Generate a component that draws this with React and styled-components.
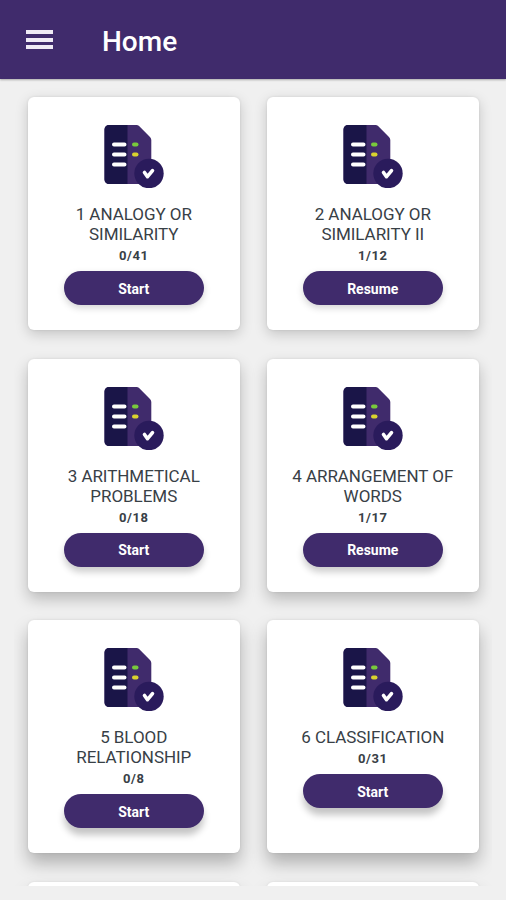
import React from 'react';
import styled, { createGlobalStyle } from 'styled-components';

const theme = {
    primary: '#402b6c',
    dark: '#1a1548',
    badge: '#2a1b5c',
    background: '#f0f0f0',
    text: '#384046'
};

const GlobalStyle = createGlobalStyle`
    body {
        margin: 0;
        background-color: ${ theme.background };
        font-family: Roboto, "Liberation Sans", sans-serif;
    }
`;

const Screen = styled.div`
    display: flex;
    flex-direction: column;
    width: 506px;
    height: 900px;
    overflow: hidden;
    background-color: ${ theme.background };
`;

const Header = styled.header`
    display: flex;
    align-items: center;
    height: 79px;
    min-height: 79px;
    box-sizing: border-box;
    padding: 4px 26px 0 26px;
    background-color: ${ theme.primary };
    box-shadow: 0 1px 2px rgba(0, 0, 0, 0.3);
    color: #fff;
`;

const MenuButton = styled.button`
    display: flex;
    flex-direction: column;
    justify-content: space-between;
    width: 27px;
    height: 19px;
    margin-bottom: 4px;
    padding: 0;
    border: none;
    background: none;
`;

const MenuLine = styled.span`
    width: 100%;
    height: 4px;
    background-color: #efeaf5;
`;

const Title = styled.h1`
    margin: 0 0 0 49px;
    font-size: 28px;
    font-weight: 500;
    line-height: 34px;
`;

const Content = styled.main`
    height: 807px;
    box-sizing: border-box;
    margin: 0 14px;
    padding: 18px 13.5px 0 14px;
    overflow: hidden;
`;

const Grid = styled.div`
    display: grid;
    grid-template-columns: 211.5px 211.5px;
    grid-auto-rows: 233px;
    gap: 28.5px 27.5px;
`;

const Card = styled.section`
    display: flex;
    flex-direction: column;
    align-items: center;
    box-sizing: border-box;
    padding-top: 27px;
    border-radius: 6px;
    background-color: #fff;
    box-shadow: 0 ${ props => 4 + props.$row * 3 }px ${ props => 13 + props.$row * 2 }px rgba(0, 0, 0, ${ props => 0.19 + props.$row * 0.04 }),
        0 0 3px rgba(0, 0, 0, 0.08);
    color: ${ theme.text };
`;

const Name = styled.h2`
    width: 180px;
    margin: 16px 0 0;
    font-size: 17px;
    font-weight: 400;
    line-height: 20px;
    letter-spacing: -0.05px;
    text-align: center;
    white-space: pre-line;
`;

const Progress = styled.span`
    margin-top: 3px;
    font-size: 13px;
    font-weight: 700;
    line-height: 18px;
    letter-spacing: 0.6px;
`;

const Action = styled.button`
    width: 140px;
    height: 34px;
    margin-top: 6px;
    padding: 1px 0 0;
    border: none;
    border-radius: 17px;
    background-color: ${ theme.primary };
    box-shadow: 0 ${ props => 3 + props.$row * 2 }px 7px rgba(0, 0, 0, ${ props => 0.17 + props.$row * 0.03 });
    color: #fff;
    font-family: inherit;
    font-size: 14px;
    font-weight: 700;
`;

const topics = [
    { name: '1 ANALOGY OR\nSIMILARITY', progress: '0/41', action: 'Start' },
    { name: '2 ANALOGY OR\nSIMILARITY II', progress: '1/12', action: 'Resume' },
    { name: '3 ARITHMETICAL\nPROBLEMS', progress: '0/18', action: 'Start' },
    { name: '4 ARRANGEMENT OF\nWORDS', progress: '1/17', action: 'Resume' },
    { name: '5 BLOOD\nRELATIONSHIP', progress: '0/8', action: 'Start' },
    { name: '6 CLASSIFICATION', progress: '0/31', action: 'Start' }
];

const QuizIcon = () => (
    <svg width="60" height="64" viewBox="0 0 60 64">
        <path d="M5 1H32.500q1.500 0 2.600 1.100L46 13q1.300 1.300 1.300 3V60H5a4.500 4.500 0 0 1-4.500-4.500V5.500A4.500 4.500 0 0 1 5 1z" fill={ theme.primary } />
        <path d="M5 1H23.500V60H5a4.500 4.500 0 0 1-4.500-4.500V5.500A4.500 4.500 0 0 1 5 1z" fill={ theme.dark } />
        <g strokeWidth="4" strokeLinecap="round">
            <path d="M10 20.500h10.500M10 30.500h10.500M10 40.500h10.500" stroke="#fff" />
            <path d="M30 20.500h2.500" stroke="#78c83c" />
            <path d="M30 30.500h2.500" stroke="#d8d22e" />
        </g>
        <circle cx="45" cy="49.500" r="14.700" fill={ theme.badge } />
        <path d="M40.500 48.500l3 4.200 5-6" fill="none" stroke="#fff" strokeWidth="3.600" strokeLinecap="round" strokeLinejoin="round" />
    </svg>
);

class App extends React.Component {
    showTopics = () =>
        topics.map((topic, index) => {
            const row = Math.floor(index / 2);
            return <Card key={`topic-${index}`} $row={ row }>
                <QuizIcon />
                <Name>{ topic.name }</Name>
                <Progress>{ topic.progress }</Progress>
                <Action $row={ row }>{ topic.action }</Action>
            </Card>
        })

    render() {
        return(
            <Screen>
                <GlobalStyle />
                <Header>
                    <MenuButton aria-label="Menu">
                        <MenuLine />
                        <MenuLine />
                        <MenuLine />
                    </MenuButton>
                    <Title>Home</Title>
                </Header>
                <Content>
                    <Grid>
                        { this.showTopics() }
                        <Card $row={ 3 } />
                        <Card $row={ 3 } />
                    </Grid>
                </Content>
            </Screen>
        )
    }
}

export default App;
